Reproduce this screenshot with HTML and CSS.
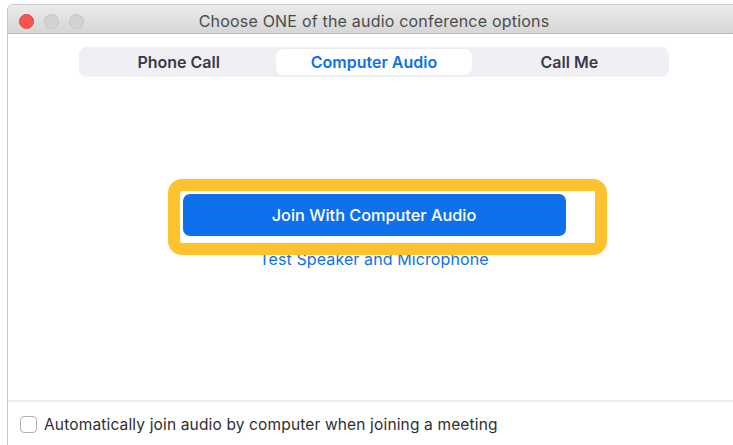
FILE: index.html
```html
<!DOCTYPE html>
<html lang="en">
<head>
<meta charset="utf-8">
<title>Choose ONE of the audio conference options</title>
<link rel="stylesheet" href="styles.css">
</head>
<body>
<div class="window">
  <header class="titlebar">
    <div class="lights">
      <span class="light close"></span>
      <span class="light"></span>
      <span class="light"></span>
    </div>
    <div class="title">Choose ONE of the audio conference options</div>
    <div></div>
  </header>

  <main class="content">
    <nav class="segmented">
      <span class="seg">Phone Call</span>
      <span class="seg active">Computer Audio</span>
      <span class="seg">Call Me</span>
    </nav>

    <div class="join">
      <div class="join-wrap">
        <button class="join-btn" type="button">Join With Computer Audio</button>
        <span class="highlight"></span>
      </div>
      <a class="test-link" href="#">Test Speaker and Microphone</a>
    </div>
  </main>

  <footer class="footer">
    <label class="auto">
      <span class="check"></span>
      <span>Automatically join audio by computer when joining a meeting</span>
    </label>
  </footer>
</div>
</body>
</html>
```

FILE: styles.css
```css
html, body {
  margin: 0;
  padding: 0;
  background: #ffffff;
  overflow: hidden;
}

body {
  width: 733px;
  height: 445px;
  font-family: Inter, "Liberation Sans", Arial, sans-serif;
}

.window {
  margin: 4px 0 0 7px;
  width: 732px;
  height: 440px;
  border-top: 1px solid #cdcdcd;
  border-left: 1px solid #c6c6c6;
  border-top-left-radius: 6px;
  display: flex;
  flex-direction: column;
  overflow: hidden;
  background: #ffffff;
}

/* title bar */
.titlebar {
  flex: none;
  height: 24px;
  padding-top: 4px;
  border-bottom: 1px solid #b9b9b9;
  background: linear-gradient(#ebebeb, #d6d6d6);
  display: grid;
  grid-template-columns: 1fr auto 1fr;
  align-items: center;
}

.lights {
  display: flex;
  gap: 10px;
  padding-left: 11px;
}

.light {
  width: 13px;
  height: 13px;
  border-radius: 50%;
  background: #d3d3d3;
  border: 1px solid #c4c4c4;
}

.light.close {
  background: #fd5252;
  border-color: #e44444;
}

.title {
  font-size: 16px;
  letter-spacing: 0.2px;
  color: #4c4c4c;
}

/* tabs */
.content {
  flex: none;
  height: 366px;
  display: flex;
  flex-direction: column;
  align-items: center;
}

.segmented {
  margin-top: 13px;
  width: 586px;
  height: 26px;
  padding: 2px;
  border-radius: 8px;
  background: #f0f0f4;
  display: grid;
  grid-template-columns: repeat(3, 1fr);
}

.seg {
  display: flex;
  align-items: center;
  justify-content: center;
  font-size: 16px;
  font-weight: 600;
  color: #39394a;
  border-radius: 7px;
}

.seg.active {
  background: #ffffff;
  color: #0e71eb;
  box-shadow: 0 0 2px rgba(0, 0, 0, 0.06);
}

/* join */
.join {
  margin-top: 117px;
  display: flex;
  flex-direction: column;
  align-items: center;
}

.join-wrap {
  position: relative;
}

.join-btn {
  display: block;
  width: 383px;
  height: 42px;
  border: 0;
  border-radius: 7px;
  background: #0e71eb;
  color: #ffffff;
  font-family: Inter, "Liberation Sans", Arial, sans-serif;
  font-size: 16.3px;
  font-weight: 500;
  padding: 0;
  cursor: pointer;
}

.highlight {
  position: absolute;
  left: -15px;
  top: -15px;
  right: -41px;
  bottom: -19px;
  border: 12px solid #fdc22e;
  border-radius: 14px;
  pointer-events: none;
}

.test-link {
  margin-top: 14px;
  line-height: 18px;
  font-size: 16px;
  letter-spacing: 0.1px;
  color: #0e71eb;
  text-decoration: none;
}

/* footer */
.footer {
  flex: 1;
  border-top: 2px solid #ececf2;
  padding: 13px 0 0 12px;
}

.auto {
  display: flex;
  align-items: center;
  gap: 7px;
  font-size: 15.5px;
  letter-spacing: 0.15px;
  color: #2f2f2f;
}

.check {
  width: 15px;
  height: 15px;
  border: 1px solid #b1b1b1;
  border-radius: 4px;
  background: #ffffff;
}
```
